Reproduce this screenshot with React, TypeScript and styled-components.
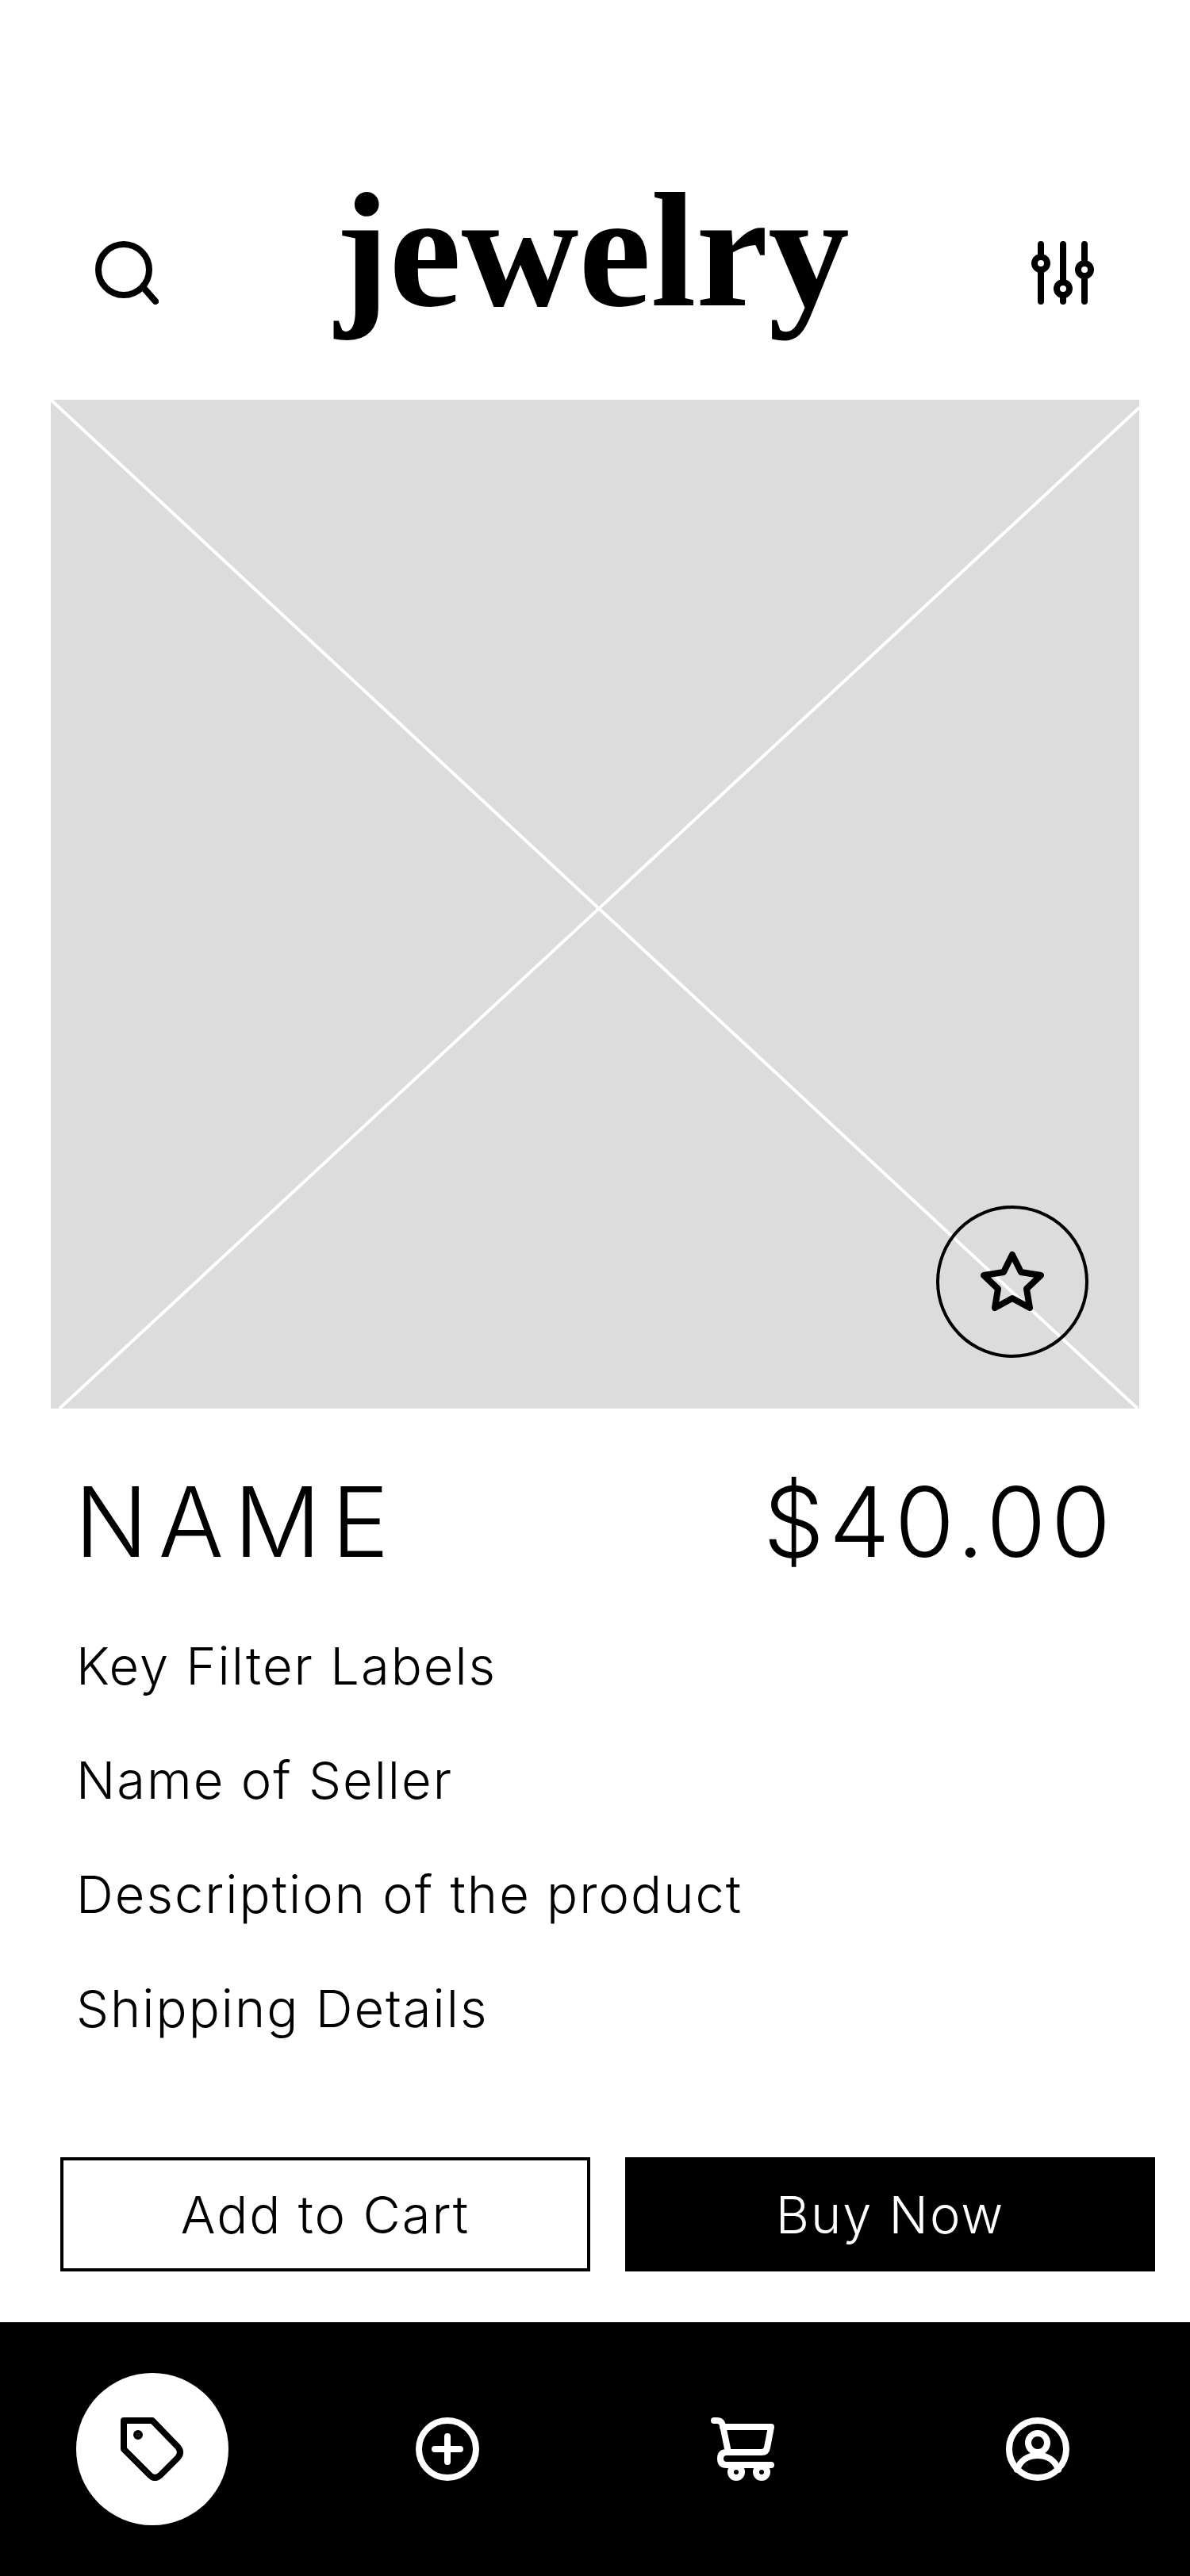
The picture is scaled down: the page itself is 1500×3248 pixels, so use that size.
import * as React from "react"
import styled, { createGlobalStyle } from "styled-components"

const GlobalStyle = createGlobalStyle`
  html, body {
    margin: 0;
    padding: 0;
    background: #fff;
  }
`

function SearchIcon() {
  return (
    <Icon viewBox="0 0 80 80" stroke="#000">
      <circle cx="36" cy="36" r="32" />
      <path d="M62 60L76 76" />
    </Icon>
  )
}

function FilterIcon() {
  return (
    <Icon viewBox="0 0 80 80" stroke="#000">
      <path d="M12 4V76M40 4V76M67 4V76" />
      <circle cx="12" cy="28" r="8" fill="#fff" />
      <circle cx="40" cy="60" r="8" fill="#fff" />
      <circle cx="67" cy="36" r="8" fill="#fff" />
    </Icon>
  )
}

function StarIcon() {
  return (
    <Icon viewBox="0 0 80 80" stroke="#000">
      <path d="M40 6L51 28L76 32L58 49L62 73L40 61L18 73L22 49L4 32L29 28Z" />
    </Icon>
  )
}

function TagIcon() {
  return (
    <Icon viewBox="0 0 80 80" stroke="#000">
      <path d="M4 4H40L72 37Q78 44 72 51L50 73Q43 79 37 73L4 40Z" />
      <circle cx="22" cy="22" r="2" fill="#000" />
    </Icon>
  )
}

function PlusIcon() {
  return (
    <Icon viewBox="0 0 80 80" stroke="#fff">
      <circle cx="40" cy="40" r="36" />
      <path d="M40 24V56M24 40H56" />
    </Icon>
  )
}

function CartIcon() {
  return (
    <Icon viewBox="0 0 80 80" stroke="#fff">
      <path d="M4 4H8C12 4 14 6 15 10L22 44" />
      <path d="M15 12H76L71 38Q70 44 64 44H20Q12 44 12 52Q12 60 20 60H76" />
      <circle cx="32" cy="69" r="7" />
      <circle cx="64" cy="69" r="7" />
    </Icon>
  )
}

function ProfileIcon() {
  return (
    <Icon viewBox="0 0 80 80" stroke="#fff">
      <circle cx="40" cy="40" r="36" />
      <circle cx="40" cy="32" r="12" />
      <path d="M14 66C18 54 28 48 40 48C52 48 62 54 66 66" />
    </Icon>
  )
}

export default function App() {
  return (
    <Page>
      <GlobalStyle />
      <Header>
        <SearchIcon />
        <Logo>jewelry</Logo>
        <FilterIcon />
      </Header>
      <Photo>
        <Cross viewBox="0 0 1372 1272" preserveAspectRatio="none">
          <line x1="0" y1="0" x2="1370" y2="1272" />
          <line x1="1372" y1="10" x2="11" y2="1272" />
        </Cross>
        <FavouriteButton>
          <StarIcon />
        </FavouriteButton>
      </Photo>
      <TitleRow>
        <Title $tracking={13}>NAME</Title>
        <Title $tracking={6}>$40.00</Title>
      </TitleRow>
      <Details>
        <Detail>Key Filter Labels</Detail>
        <Detail>Name of Seller</Detail>
        <Detail>Description of the product</Detail>
        <Detail>Shipping Details</Detail>
      </Details>
      <Actions>
        <ActionButton>Add to Cart</ActionButton>
        <ActionButton $filled>Buy Now</ActionButton>
      </Actions>
      <BottomNav>
        <NavItem $active>
          <TagIcon />
        </NavItem>
        <NavItem>
          <PlusIcon />
        </NavItem>
        <NavItem>
          <CartIcon />
        </NavItem>
        <NavItem>
          <ProfileIcon />
        </NavItem>
      </BottomNav>
    </Page>
  )
}

const Page = styled.div`
  width: 1500px;
  height: 3248px;
  display: flex;
  flex-direction: column;
  overflow: hidden;
  background: #fff;
  color: #000;
  font-family: Inter, "Liberation Sans", sans-serif;
`

const Icon = styled.svg`
  width: 80px;
  height: 80px;
  flex: none;
  fill: none;
  stroke-width: 8;
  stroke-linecap: round;
  stroke-linejoin: round;
`

const Header = styled.header`
  height: 504px;
  box-sizing: border-box;
  padding: 304px 120px 0;
  display: flex;
  justify-content: space-between;
  align-items: flex-start;
`

const Logo = styled.h1`
  margin: -91px 0 0 -7px;
  font: 700 205px/1 "Liberation Serif", serif;
`

const Photo = styled.div`
  position: relative;
  width: 1372px;
  height: 1272px;
  margin-left: 64px;
  background: #dcdcdc;
`

const Cross = styled.svg`
  position: absolute;
  inset: 0;
  width: 100%;
  height: 100%;
  stroke: #fff;
  stroke-width: 4;
`

const FavouriteButton = styled.div`
  position: absolute;
  left: 1116px;
  top: 1016px;
  width: 192px;
  height: 192px;
  box-sizing: border-box;
  border: 4px solid #000;
  border-radius: 50%;
  display: flex;
  align-items: center;
  justify-content: center;
`

const TitleRow = styled.div`
  height: 253px;
  box-sizing: border-box;
  padding: 32px 94px 0 94px;
  display: flex;
  justify-content: space-between;
  align-items: center;
`

const Title = styled.div<{ $tracking: number }>`
  font-size: 122px;
  font-weight: 350;
  letter-spacing: ${p => p.$tracking}px;
`

const Details = styled.div`
  padding-left: 96px;
  display: flex;
  flex-direction: column;
`

const Detail = styled.div`
  font-size: 65px;
  font-weight: 350;
  line-height: 144px;
  letter-spacing: 2px;
`

const Actions = styled.div`
  margin-top: 115px;
  padding-left: 76px;
  display: flex;
  gap: 44px;
`

const ActionButton = styled.div<{ $filled?: boolean }>`
  width: 668px;
  height: 144px;
  box-sizing: border-box;
  border: 4px solid #000;
  background: ${p => (p.$filled ? "#000" : "#fff")};
  color: ${p => (p.$filled ? "#fff" : "#000")};
  display: flex;
  align-items: center;
  justify-content: center;
  font-size: 65px;
  font-weight: 350;
  letter-spacing: 2px;
`

const BottomNav = styled.nav`
  margin-top: auto;
  height: 320px;
  box-sizing: border-box;
  padding: 0 6px;
  background: #000;
  display: grid;
  grid-template-columns: repeat(4, 1fr);
  align-items: center;
  justify-items: center;
`

const NavItem = styled.div<{ $active?: boolean }>`
  width: 192px;
  height: 192px;
  border-radius: 50%;
  background: ${p => (p.$active ? "#fff" : "transparent")};
  display: flex;
  align-items: center;
  justify-content: center;
`
